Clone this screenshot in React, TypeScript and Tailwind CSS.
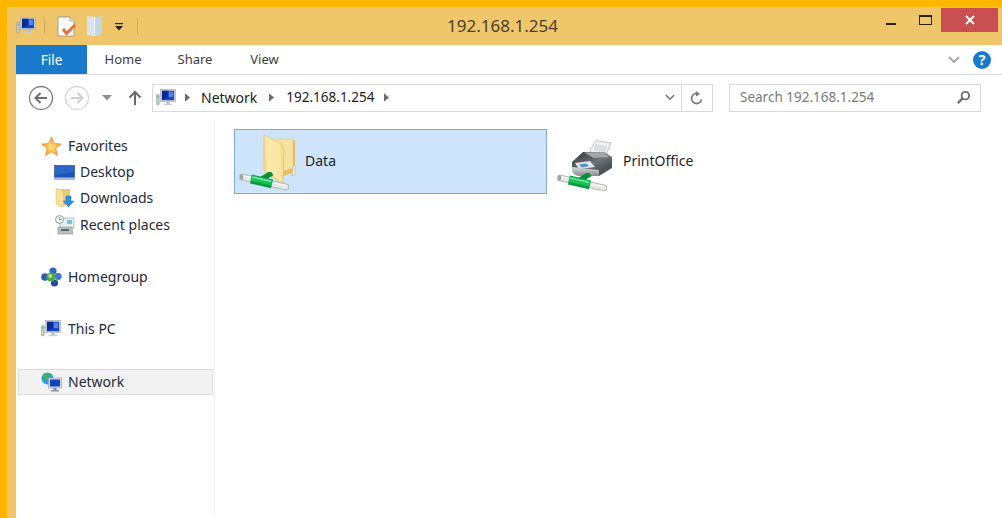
import React from "react";

const Computer = ({ className = "" }: { className?: string }) => (
  <svg viewBox="0 0 22 20" className={className}>
    <rect x="0.5" y="6" width="3" height="11.5" rx="0.8" fill="#c9cccc" stroke="#8b9090" strokeWidth="0.6" />
    <rect x="1.3" y="7.5" width="1.4" height="2" fill="#4bd04b" />
    <rect x="5" y="0.5" width="16.5" height="13.5" fill="#d5d9dd" stroke="#a3a9ae" strokeWidth="0.7" />
    <rect x="6.5" y="2" width="13.5" height="10.5" fill="#1546c2" />
    <path d="M6.5 2h7v7l-7 3.5z" fill="#0b2a96" />
    <path d="M14 3h5v6h-5z" fill="#4f87e6" />
    <rect x="11.5" y="14" width="3.5" height="2.5" fill="#b9bec2" />
    <rect x="8.5" y="16.3" width="9.5" height="1.7" fill="#c9cdd0" />
  </svg>
);

const Pipe = () => (
  <svg viewBox="0 0 50 19" className="w-[50px] h-[19px]">
    <path d="M3 5 L47 15" stroke="#a4aea8" strokeWidth="6.5" strokeLinecap="round" />
    <path d="M3 5 L47 15" stroke="#e4e9e5" strokeWidth="5" strokeLinecap="round" />
    <path d="M3 3.6 L47 13.6" stroke="#f7f9f7" strokeWidth="1.2" strokeLinecap="round" />
    <ellipse cx="2.6" cy="5" rx="1.6" ry="2.8" fill="#98a39c" />
    <path d="M23 7 L33 1" stroke="#0c8e3c" strokeWidth="5.5" />
    <path d="M12 7 L33 11.8" stroke="#0a9a40" strokeWidth="9" />
    <path d="M12 6 L33 10.8" stroke="#18c45a" strokeWidth="5.5" />
    <path d="M13 5 L32 9.4" stroke="#8cf0b0" strokeWidth="1.2" />
  </svg>
);

const BigFolder = () => (
  <svg viewBox="0 0 34 50" className="w-[34px] h-[50px]">
    <path d="M7 6 L31 6 Q32 6 32 8 L32 38 L12 45z" fill="#e3bf62" />
    <path d="M7 5 L30 5 L30 34 L12 40z" fill="#f6e2a0" stroke="#dcc07a" strokeWidth="0.5" />
    <path d="M30 32 L32 31 L32 41 L29 42z" fill="#eef1f2" stroke="#b6a670" strokeWidth="0.5" />
    <path d="M1 1 L18 10 L21 15 L20 50 L3 39 Q1 38 1 36z" fill="#f7dd8b" stroke="#d8bb6c" strokeWidth="0.6" />
    <path d="M2 2 L17 10 L19 48 L4 38z" fill="#fbe8a9" />
  </svg>
);

const Printer = () => (
  <svg viewBox="0 0 42 38" className="w-[42px] h-[38px]">
    <defs>
      <linearGradient id="pb" x1="0" y1="0" x2="1" y2="1">
        <stop offset="0%" stopColor="#2f3336" />
        <stop offset="55%" stopColor="#6e7477" />
        <stop offset="100%" stopColor="#30353a" />
      </linearGradient>
      <linearGradient id="pf" x1="0" y1="0" x2="0" y2="1">
        <stop offset="0%" stopColor="#d4d8da" />
        <stop offset="100%" stopColor="#868c90" />
      </linearGradient>
    </defs>
    <path d="M19 10 L25 0.5 L40 3 L35 15 L21 14z" fill="#f0f1f1" stroke="#a9adad" strokeWidth="0.7" />
    <path d="M24 4 L36 6 L34 12 L23 11z" fill="#dcdede" />
    <path d="M1 22 L12 12 L33 12 L41 17 L41 27 L28 33 L6 33 Q1 31 1 27z" fill="url(#pb)" />
    <path d="M13 12.5 L33 12 L38 17 L23 18z" fill="#a0a6a9" />
    <path d="M4 23 L19 21 L24 27 L8 29z" fill="#e2e5e6" />
    <path d="M8 24.5 L15 23.5 L18 26 L11 27.5z" fill="#4a8ed6" />
    <path d="M1 27 L28 30 L28 36 L7 36 Q1 34 1 30z" fill="url(#pf)" />
    <path d="M28 30 L41 24 L41 28 L28 36z" fill="#4d5255" />
  </svg>
);

const Star = () => (
  <svg viewBox="0 0 22 22" className="w-[21px] h-[21px]">
    <defs>
      <radialGradient id="st" cx="50%" cy="55%" r="55%">
        <stop offset="0%" stopColor="#ffe27a" />
        <stop offset="100%" stopColor="#f59b23" />
      </radialGradient>
    </defs>
    <path d="M11 1 L13.8 7.8 L21 8.4 L15.5 13 L17.3 20.5 L11 16.5 L4.7 20.5 L6.5 13 L1 8.4 L8.2 7.8z" fill="url(#st)" stroke="#e58d3a" strokeWidth="0.8" />
  </svg>
);

const DesktopIcon = () => (
  <svg viewBox="0 0 21 15" className="w-[21px] h-[15px]">
    <rect width="21" height="15" fill="#4c6f9f" />
    <rect x="1" y="1" width="19" height="11.5" fill="#1c53b4" />
    <path d="M1 1h19v6L1 10z" fill="#2b67cb" />
    <rect x="0" y="12.5" width="21" height="2.5" fill="#a8bbd2" />
  </svg>
);

const DownloadsIcon = () => (
  <svg viewBox="0 0 20 20" className="w-[20px] h-[20px]">
    <path d="M3 1 L15 1 L15 16 L5 19z" fill="#e9c976" />
    <path d="M1 0 L8 3 L9 19 L1 16z" fill="#f8e199" stroke="#d8bd72" strokeWidth="0.5" />
    <path d="M11 8 L16 8 L16 13 L19 13 L13.5 19 L8 13 L11 13z" fill="#2a8fdc" stroke="#1b6cb2" strokeWidth="0.4" />
  </svg>
);

const RecentIcon = () => (
  <svg viewBox="0 0 20 20" className="w-[20px] h-[20px]">
    <rect x="5" y="3" width="14" height="10" fill="#e8f0f2" stroke="#8f9a9e" strokeWidth="0.6" />
    <rect x="12" y="5" width="5" height="4" fill="#7fc0dc" />
    <circle cx="4.5" cy="4.5" r="4" fill="#f1f3f3" stroke="#7f8a8e" strokeWidth="0.8" />
    <path d="M4.5 2.5v2h2" stroke="#555" strokeWidth="0.7" fill="none" />
    <path d="M3 12 L17 12 L18 19 L3 19z" fill="#b9c1c4" stroke="#7f8a8e" strokeWidth="0.5" />
    <rect x="6" y="14" width="8" height="2" fill="#5d686c" />
  </svg>
);

const HomegroupIcon = () => (
  <svg viewBox="0 0 21 20" className="w-[21px] h-[20px]">
    <circle cx="12" cy="4" r="3.6" fill="#2d66c4" />
    <circle cx="4" cy="10" r="3.8" fill="#2d5fb8" />
    <circle cx="17.2" cy="9.5" r="3.4" fill="#3c78d4" />
    <circle cx="13.5" cy="16" r="3.6" fill="#234f9f" />
    <circle cx="10" cy="10" r="4.6" fill="#4cab45" />
    <circle cx="9.2" cy="9" r="1.9" fill="#b7e39a" />
  </svg>
);

const NetworkIcon = () => (
  <svg viewBox="0 0 21 20" className="w-[21px] h-[20px]">
    <circle cx="6.5" cy="6.5" r="6" fill="#2c9ae0" />
    <path d="M2 3.5 Q6 0 9 2 L7 6 L3 8z" fill="#43b54a" />
    <path d="M7 9 L10 8 L9 12z" fill="#43b54a" />
    <rect x="7.5" y="6" width="13" height="10" fill="#d3dde3" stroke="#8fa0aa" strokeWidth="0.6" />
    <rect x="9" y="7.5" width="10" height="7" fill="#1245bb" />
    <rect x="12.5" y="16" width="3" height="2" fill="#7d8c95" />
    <rect x="10" y="18" width="8" height="1.5" fill="#8a98a0" />
  </svg>
);

const PageCheck = () => (
  <svg viewBox="0 0 20 21" className="w-[20px] h-[21px]">
    <path d="M1 1 L13 1 L17 5 L17 20 L1 20z" fill="#fbfbfb" stroke="#8d8d8d" strokeWidth="0.8" />
    <path d="M13 1 L13 5 L17 5" fill="#e3e3e3" stroke="#8d8d8d" strokeWidth="0.6" />
    <path d="M6 13 L9.5 17.5 L18 9" fill="none" stroke="#e1703c" strokeWidth="3" />
  </svg>
);

const PropIcon = () => (
  <svg viewBox="0 0 17 20" className="w-[17px] h-[20px]">
    <path d="M1 0 L8 1 L8 20 L1 19z" fill="#d6e3f0" />
    <path d="M9 1 L16 0 L16 18 L9 20z" fill="#c5d6e9" />
    <path d="M8 1 L9 1 L9 20 L8 20z" fill="#eef3f8" />
  </svg>
);

function NavItem({ icon, label, indent, className = "" }: { icon: React.ReactNode; label: string; indent?: boolean; className?: string }) {
  return (
    <div className={`flex items-center h-[26px] ${indent ? "pl-[36px]" : "pl-[22px]"} ${className}`}>
      <span className={`flex justify-center items-center shrink-0 ${indent ? "w-[25px]" : "w-[26px]"}`}>{icon}</span>
      <span className={`text-[14px] text-[#1e2a38] leading-none ${indent ? "ml-[3px]" : "ml-[4px]"}`}>{label}</span>
    </div>
  );
}

export default function App() {
  return (
    <div className="h-[518px] w-[1002px] overflow-hidden bg-[#fdb700] pt-[7px] pl-[7px] flex font-['Noto_Sans',sans-serif]">
      <div className="flex-1 flex flex-col bg-[#efc669] pl-[9px] min-w-0">
        <div className="h-[38px] shrink-0 flex items-start -ml-[9px] relative">
          <div className="flex items-center h-[24px] mt-[7px] pl-[9px] w-[340px]">
            <Computer className="w-[20px] h-[18px]" />
            <span className="w-px h-[16px] bg-[#c9a860] ml-[8px]" />
            <span className="ml-[12px] flex"><PageCheck /></span>
            <span className="ml-[9px] flex"><PropIcon /></span>
            <svg viewBox="0 0 10 10" className="w-[10px] h-[10px] ml-[11px] mt-[2px]">
              <rect x="1" y="1" width="8" height="1.2" fill="#222" />
              <path d="M1 4 H9 L5 8.5z" fill="#222" />
            </svg>
            <span className="w-px h-[16px] bg-[#c9a860] ml-[13px]" />
          </div>
          <div className="flex-1 text-center text-[17px] text-[#4a4030] pt-[7px] leading-[24px] -ml-[229px]">192.168.1.254</div>
          <div className="flex items-start w-[115px] shrink-0">
            <span className="w-[10px] h-[2px] bg-[#2b2416] mt-[16px] ml-[-1px]" />
            <span className="w-[13px] h-[10px] border border-[#2b2416] border-t-[2px] mt-[8px] ml-[23px]" />
            <span className="flex items-center justify-center w-[57px] h-[24px] bg-[#c85050] ml-[9px] mt-[1px] text-white">
              <svg viewBox="0 0 10 10" className="w-[10px] h-[10px]">
                <path d="M1 1 L9 9 M9 1 L1 9" stroke="#fff" strokeWidth="1.8" />
              </svg>
            </span>
          </div>
        </div>

        <div className="flex-1 bg-white flex flex-col min-h-0">
          <div className="h-[30px] shrink-0 flex items-stretch border-b border-[#dadbdc] text-[13px] text-[#3c3c3c]">
            <div className="w-[71px] bg-[#1979ca] text-white flex items-center justify-center pt-[1px] text-[13.5px]">File</div>
            <div className="ml-[17px] w-[38px] flex items-center justify-center pt-[1px]">Home</div>
            <div className="ml-[35px] w-[36px] flex items-center justify-center pt-[1px]">Share</div>
            <div className="ml-[36px] w-[31px] flex items-center justify-center pt-[1px]">View</div>
            <div className="flex-1" />
            <div className="flex items-center pr-[11px]">
              <svg viewBox="0 0 12 8" className="w-[12px] h-[8px] mr-[13px]">
                <path d="M1 1 L6 6 L11 1" fill="none" stroke="#a8a8a8" strokeWidth="2" />
              </svg>
              <span className="w-[18px] h-[18px] rounded-full bg-[#1979ca] text-white text-[14px] font-bold flex items-center justify-center leading-none">?</span>
            </div>
          </div>

          <div className="h-[45px] shrink-0 flex items-center">
            <svg viewBox="0 0 26 26" className="w-[26px] h-[26px] ml-[12px]">
              <circle cx="13" cy="13" r="11.5" fill="#fff" stroke="#7f7f7f" strokeWidth="1.3" />
              <path d="M19 13 H8 M12.5 8 L7.5 13 L12.5 18" fill="none" stroke="#6f6f6f" strokeWidth="2" />
            </svg>
            <svg viewBox="0 0 26 26" className="w-[26px] h-[26px] ml-[10px]">
              <circle cx="13" cy="13" r="11.5" fill="#fff" stroke="#d6d6d6" strokeWidth="1.3" />
              <path d="M7 13 H18 M13.5 8 L18.5 13 L13.5 18" fill="none" stroke="#cfcfcf" strokeWidth="2" />
            </svg>
            <svg viewBox="0 0 10 6" className="w-[10px] h-[6px] ml-[12px]">
              <path d="M0 0 H10 L5 5.5z" fill="#8e8e8e" />
            </svg>
            <svg viewBox="0 0 14 16" className="w-[14px] h-[16px] ml-[16px]">
              <path d="M7 15 V2 M1.5 7.5 L7 2 L12.5 7.5" fill="none" stroke="#6a6a6a" strokeWidth="2" />
            </svg>
            <div className="ml-[10px] w-[561px] h-[28px] border border-[#d9d9d9] flex items-center">
              <Computer className="ml-[3px] w-[20px] h-[18px]" />
              <svg viewBox="0 0 6 10" className="w-[5px] h-[9px] ml-[9px]"><path d="M0 0 L6 5 L0 10z" fill="#6e6e6e" /></svg>
              <span className="text-[14px] text-[#222] ml-[11px]">Network</span>
              <svg viewBox="0 0 6 10" className="w-[5px] h-[9px] ml-[12px]"><path d="M0 0 L6 5 L0 10z" fill="#6e6e6e" /></svg>
              <span className="text-[13.5px] text-[#222] ml-[12px]">192.168.1.254</span>
              <svg viewBox="0 0 6 10" className="w-[5px] h-[9px] ml-[10px]"><path d="M0 0 L6 5 L0 10z" fill="#6e6e6e" /></svg>
              <div className="flex-1" />
              <svg viewBox="0 0 12 8" className="w-[10px] h-[7px] mr-[6px]"><path d="M1 1 L6 6 L11 1" fill="none" stroke="#6e6e6e" strokeWidth="1.8" /></svg>
              <div className="w-[31px] h-full border-l border-[#d9d9d9] flex items-center justify-center">
                <svg viewBox="0 0 14 14" className="w-[14px] h-[14px]">
                  <path d="M11.5 8.5 A5 5 0 1 1 7 2.5" fill="none" stroke="#7a7a7a" strokeWidth="1.8" />
                  <path d="M6 0 L10 3 L6 5.5z" fill="#7a7a7a" />
                </svg>
              </div>
            </div>
            <div className="ml-[16px] w-[252px] h-[28px] border border-[#d9d9d9] flex items-center pl-[10px] pr-[9px]">
              <span className="flex-1 text-[13.5px] text-[#7a7a7a]">Search 192.168.1.254</span>
              <svg viewBox="0 0 16 16" className="w-[15px] h-[15px]">
                <circle cx="10" cy="6" r="4" fill="none" stroke="#6e6e6e" strokeWidth="2" />
                <path d="M7 9 L2 14" stroke="#6e6e6e" strokeWidth="2.6" />
              </svg>
            </div>
          </div>

          <div className="flex-1 flex min-h-0">
            <div className="w-[199px] shrink-0 border-r border-[#f0f0f0] pt-[13px]">
              <NavItem icon={<Star />} label="Favorites" />
              <NavItem icon={<DesktopIcon />} label="Desktop" indent />
              <NavItem icon={<DownloadsIcon />} label="Downloads" indent />
              <NavItem icon={<RecentIcon />} label="Recent places" indent className="mt-px" />
              <div className="h-[26px]" />
              <NavItem icon={<HomegroupIcon />} label="Homegroup" />
              <div className="h-[26px]" />
              <NavItem icon={<Computer className="w-[20px] h-[18px]" />} label="This PC" />
              <div className="h-[27px]" />
              <div className="ml-[2px] w-[195px] h-[26px] flex items-center bg-[#f2f2f2] border border-[#dcdcdc] pl-[19px]">
                <span className="w-[26px] flex justify-center shrink-0"><NetworkIcon /></span>
                <span className="text-[14px] text-[#1e2a38] leading-none ml-[4px]">Network</span>
              </div>
            </div>

            <div className="flex-1 pl-[19px] pt-[9px] flex items-start">
              <div className="w-[313px] h-[65px] bg-[#cde4fa] border border-[#7ea9d8] flex items-center relative">
                <div className="ml-[28px] mt-[-5px]"><BigFolder /></div>
                <div className="absolute left-[4px] top-[42px]"><Pipe /></div>
                <span className="ml-[8px] mt-[-2px] text-[14px] text-[#1e1e2a]">Data</span>
              </div>
              <div className="h-[65px] flex items-center relative w-[200px]">
                <div className="ml-[24px] mt-[-6px]"><Printer /></div>
                <div className="absolute left-[10px] top-[44px]"><Pipe /></div>
                <span className="ml-[10px] mt-[-2px] text-[14px] text-[#1e1e2a]">PrintOffice</span>
              </div>
            </div>
          </div>
        </div>
      </div>
    </div>
  );
}
